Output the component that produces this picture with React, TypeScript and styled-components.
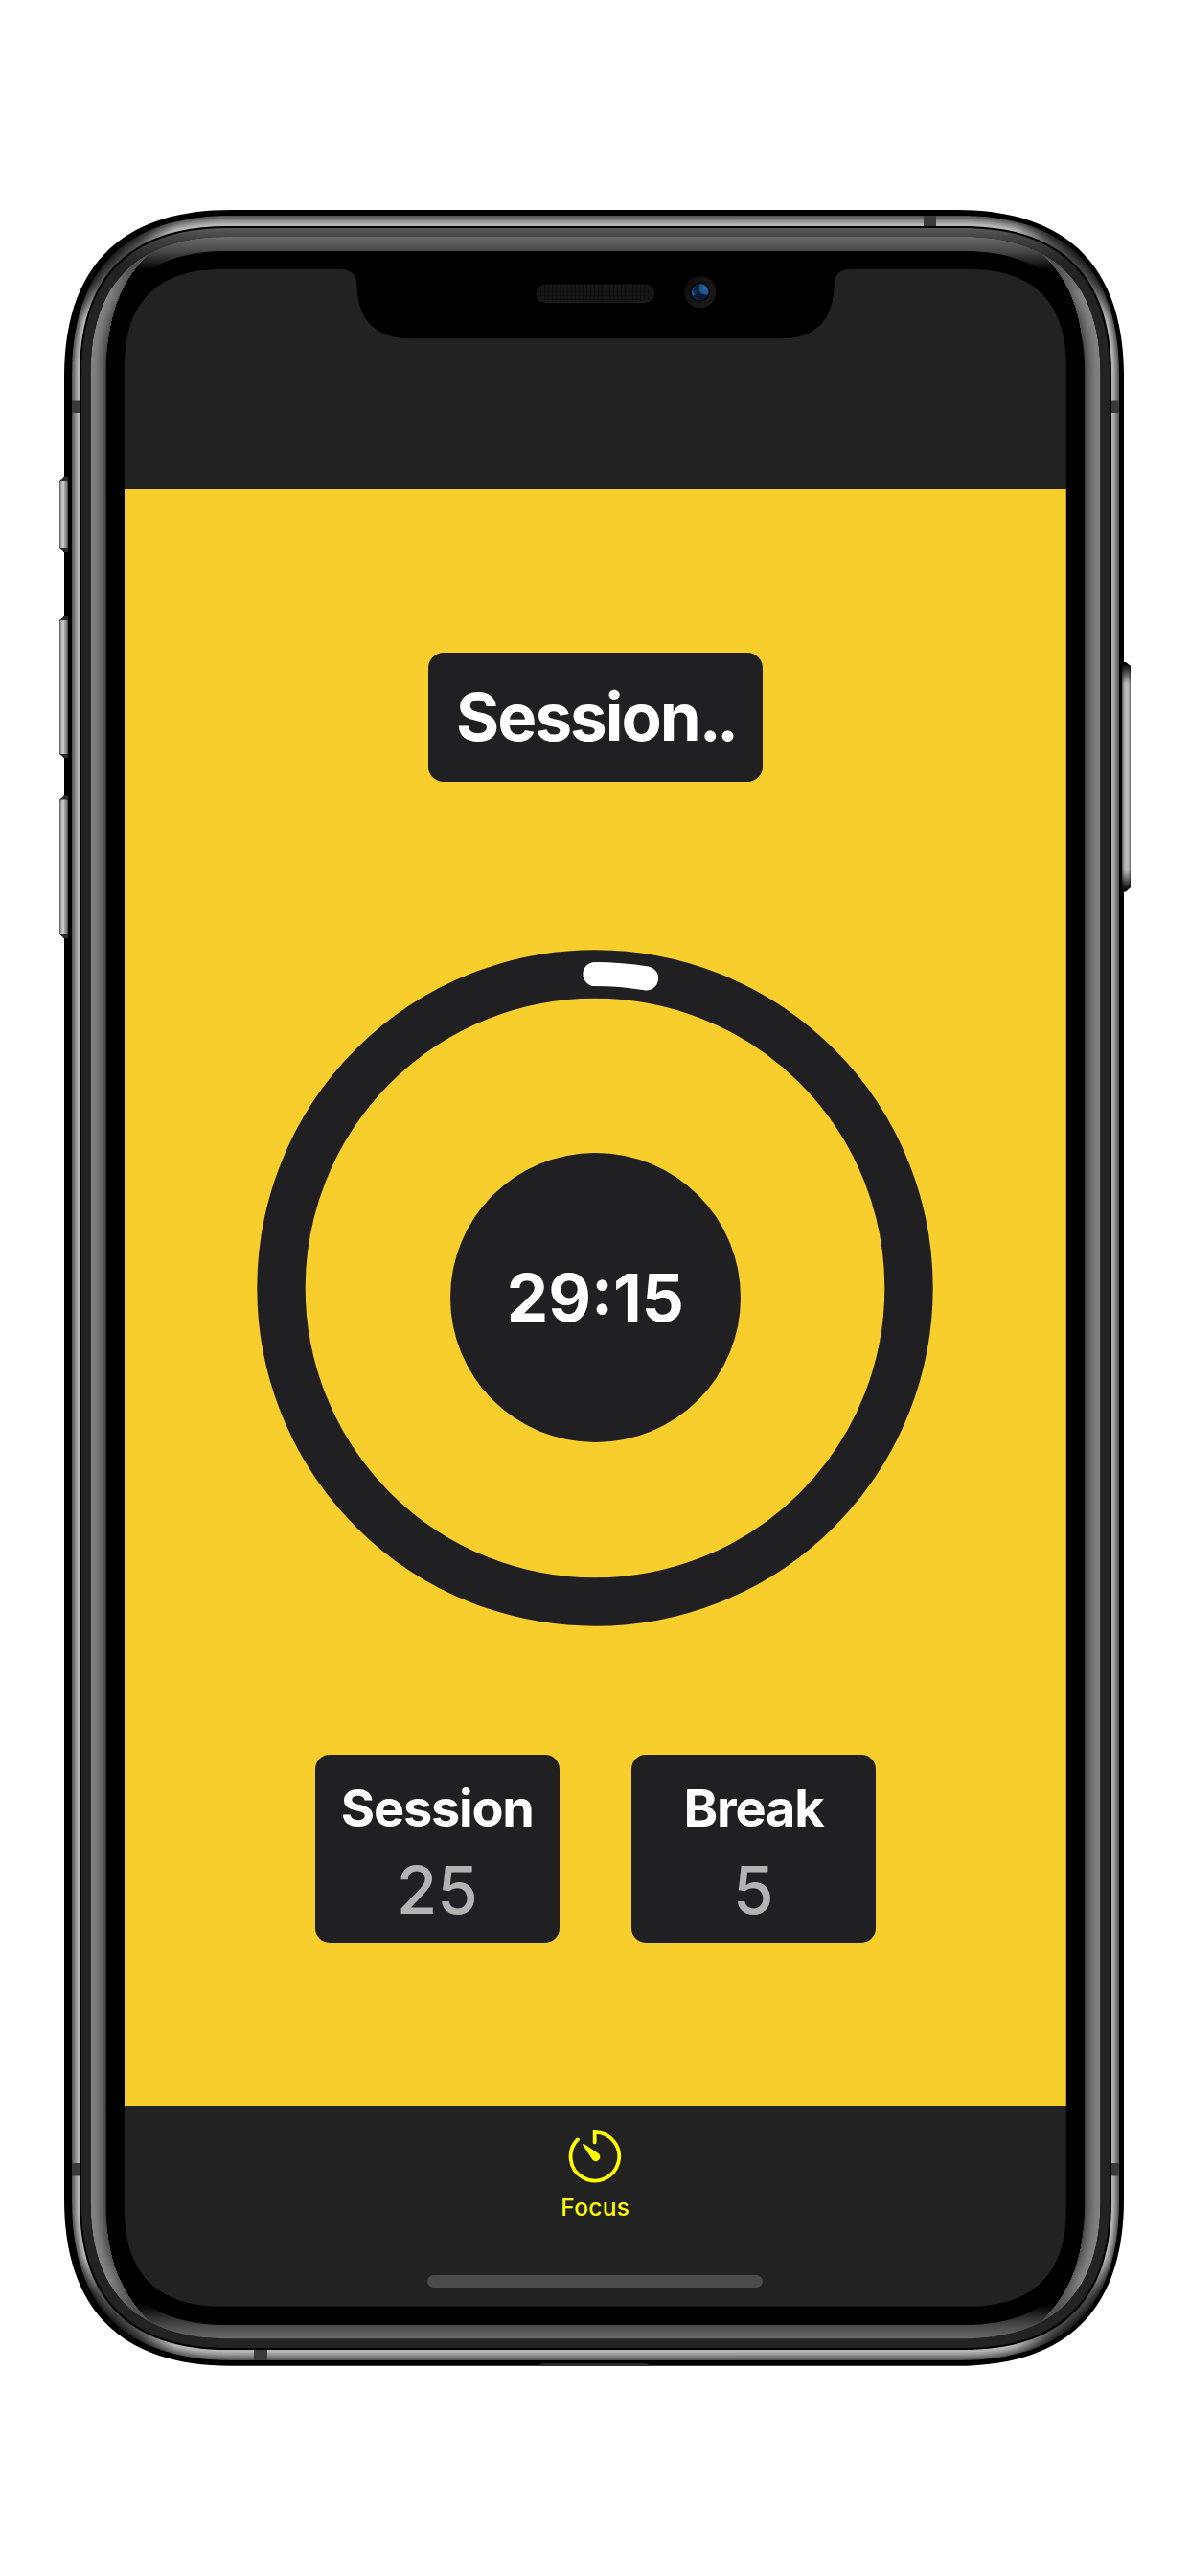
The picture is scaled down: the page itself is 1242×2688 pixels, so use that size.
import React from "react";
import styled, { createGlobalStyle } from "styled-components";

const GlobalStyle = createGlobalStyle`
  *, *::before, *::after { box-sizing: border-box; }
  html, body { margin: 0; padding: 0; background: #fff; }
  body { font-family: Inter, "Liberation Sans", sans-serif; }
`;

type Box = { l: number; t: number; r: number; b: number; rad: number };

/* Rounded rectangle whose corners ease into the straight edges. */
const roundPath = ({ l, t, r, b, rad }: Box) => {
  const e = rad * 1.16;
  const c = (rad * 2.343 - e) / 3;
  return [
    `M${l + e} ${t}H${r - e}`,
    `C${r - c} ${t} ${r} ${t + c} ${r} ${t + e}`,
    `V${b - e}`,
    `C${r} ${b - c} ${r - c} ${b} ${r - e} ${b}`,
    `H${l + e}`,
    `C${l + c} ${b} ${l} ${b - c} ${l} ${b - e}`,
    `V${t + e}`,
    `C${l} ${t + c} ${l + c} ${t} ${l + e} ${t}Z`,
  ].join("");
};

const mix = (a: number, b: number, k: number) => a + (b - a) * k;
const between = (a: Box, b: Box, k: number): Box => ({
  l: mix(a.l, b.l, k),
  t: mix(a.t, b.t, k),
  r: mix(a.r, b.r, k),
  b: mix(a.b, b.b, k),
  rad: mix(a.rad, b.rad, k),
});

const BODY: Box = { l: 67, t: 219, r: 1173, b: 2468.7, rad: 150 };
const METAL: Box = { l: 75, t: 225, r: 1168, b: 2463, rad: 143 };
const GAP: Box = { l: 83, t: 236, r: 1160, b: 2452, rad: 133 };
const RIM: Box = { l: 85, t: 238, r: 1158, b: 2450, rad: 131 };
const BEVEL: Box = { l: 94.5, t: 247, r: 1148.5, b: 2440.3, rad: 123 };
const GLASS: Box = { l: 110.5, t: 262, r: 1132.2, b: 2426, rad: 108 };
const SCREEN: Box = { l: 130, t: 281, r: 1112.7, b: 2406.7, rad: 87 };

const SCREEN_CLIP = roundPath({
  l: 0,
  t: 0,
  r: SCREEN.r - SCREEN.l,
  b: SCREEN.b - SCREEN.t,
  rad: SCREEN.rad,
});

const VOLUME_KEYS = [
  { y: 497, h: 80 },
  { y: 642, h: 150 },
  { y: 829.5, h: 150.5 },
];

type BandProps = { from: Box; to: Box; shades: number[]; steps: number };

const Band = ({ from, to, shades, steps }: BandProps) => (
  <>
    {Array.from({ length: steps }, (_, i) => {
      const k = i / steps;
      const p = k * (shades.length - 1);
      const s = Math.floor(p);
      const g = Math.round(mix(shades[s], shades[s + 1], p - s));
      return <path key={i} d={roundPath(between(from, to, k))} fill={`rgb(${g},${g},${g})`} />;
    })}
  </>
);

const FrameArt = styled.svg`
  position: absolute;
  inset: 0;
  display: block;
`;

const DeviceFrame = () => (
  <FrameArt width="1242" height="2688" viewBox="0 0 1242 2688" aria-hidden="true">
    <defs>
      <linearGradient id="rim" gradientUnits="userSpaceOnUse" x1="0" x2="0" y1="238" y2="2450">
        <stop offset="0" stopColor="#5a5a5a" />
        <stop offset="0.0041" stopColor="#444" />
        <stop offset="0.016" stopColor="#232323" />
        <stop offset="1" stopColor="#232323" />
      </linearGradient>
      <linearGradient id="bevelTop" gradientUnits="userSpaceOnUse" x1="0" x2="0" y1="247" y2="282">
        <stop offset="0" stopColor="#6c6c6c" />
        <stop offset="0.43" stopColor="#484848" />
        <stop offset="1" stopColor="#000" />
      </linearGradient>
      <linearGradient id="bevelBottom" gradientUnits="userSpaceOnUse" x1="0" x2="0" y1="2405" y2="2440">
        <stop offset="0" stopColor="#000" />
        <stop offset="0.6" stopColor="#484848" />
        <stop offset="1" stopColor="#6a6a6a" />
      </linearGradient>
      <linearGradient id="keyLeft" x1="0" x2="1" y1="0" y2="0">
        <stop offset="0" stopColor="#555" />
        <stop offset="0.2" stopColor="#a8a8a8" />
        <stop offset="0.45" stopColor="#d4d4d4" />
        <stop offset="0.62" stopColor="#a0a0a0" />
        <stop offset="0.8" stopColor="#8a8a8a" />
        <stop offset="1" stopColor="#444" />
      </linearGradient>
      <linearGradient id="keyRight" x1="0" x2="1" y1="0" y2="0">
        <stop offset="0" stopColor="#555" />
        <stop offset="0.25" stopColor="#a8a8a8" />
        <stop offset="0.5" stopColor="#bebebe" />
        <stop offset="0.8" stopColor="#b4b4b4" />
        <stop offset="1" stopColor="#555" />
      </linearGradient>
      <linearGradient id="keyFade" x1="0" x2="0" y1="0" y2="1">
        <stop offset="0" stopColor="#000" />
        <stop offset="0.02" stopColor="#000" stopOpacity="0.85" />
        <stop offset="0.095" stopColor="#000" stopOpacity="0" />
        <stop offset="0.905" stopColor="#000" stopOpacity="0" />
        <stop offset="0.98" stopColor="#000" stopOpacity="0.85" />
        <stop offset="1" stopColor="#000" />
      </linearGradient>
      <radialGradient id="cornerShade">
        <stop offset="0" stopColor="#000" stopOpacity="0.75" />
        <stop offset="0.5" stopColor="#000" stopOpacity="0.55" />
        <stop offset="1" stopColor="#000" stopOpacity="0" />
      </radialGradient>
      <radialGradient id="lens" cx="0.9" cy="0.25" r="0.95">
        <stop offset="0" stopColor="#2a6bac" />
        <stop offset="0.4" stopColor="#1c5490" />
        <stop offset="0.6" stopColor="#0d1a36" />
        <stop offset="0.8" stopColor="#12294c" />
        <stop offset="1" stopColor="#2f6aa6" />
      </radialGradient>
      <linearGradient id="lensRing" x1="0" y1="0" x2="1" y2="1">
        <stop offset="0" stopColor="#0c0c0c" />
        <stop offset="1" stopColor="#1d1d1d" />
      </linearGradient>
      <clipPath id="bevelClip">
        <path d={roundPath(BEVEL)} />
      </clipPath>
      <clipPath id="metalClip">
        <path d={roundPath(METAL)} />
      </clipPath>
      <clipPath id="sideClip">
        <path d="M90 200H158V262.5C126 290 110.5 328 110.5 395V2300C110.5 2358 126 2394 158 2425V2460H90Z" />
        <path d="M1153 200H1085V262.5C1117 290 1132.2 328 1132.2 395V2300C1132.2 2358 1117 2394 1085 2425V2460H1153Z" />
      </clipPath>
    </defs>

    {VOLUME_KEYS.map(({ y, h }) => (
      <path
        key={y}
        d={`M71 ${y}L67 ${y + 1}L62 ${y + 5}V${y + h - 5}L67 ${y + h - 1}L71 ${y + h}Z`}
        fill="#2a2a2a"
      />
    ))}

    <path d={roundPath(BODY)} fill="#000" />
    <Band from={METAL} to={GAP} shades={[85, 112, 138, 160, 184, 176]} steps={10} />
    <g clipPath="url(#metalClip)">
      <circle cx="106" cy="258" r="78" fill="url(#cornerShade)" />
      <circle cx="1135" cy="258" r="78" fill="url(#cornerShade)" />
      <circle cx="106" cy="2431" r="78" fill="url(#cornerShade)" />
      <circle cx="1135" cy="2431" r="78" fill="url(#cornerShade)" />
      <g fill="#3a3a3a">
        <rect x="964" y="225" width="13" height="11" />
        <rect x="265" y="2452" width="14" height="11" />
        <rect x="75" y="417.5" width="8" height="13.5" />
        <rect x="1160" y="417.5" width="8" height="13.5" />
        <rect x="75" y="2257" width="8" height="13.5" />
        <rect x="1160" y="2257" width="8" height="13.5" />
      </g>
    </g>
    <path d={roundPath(GAP)} fill="#000" />
    <path d={roundPath(RIM)} fill="url(#rim)" />
    <path d={roundPath(BEVEL)} fill="#000" />
    <g clipPath="url(#bevelClip)">
      <rect x="94" y="246" width="1055" height="37" fill="url(#bevelTop)" />
      <rect x="94" y="2404" width="1055" height="38" fill="url(#bevelBottom)" />
    </g>
    <g clipPath="url(#sideClip)">
      <g clipPath="url(#bevelClip)">
        <Band from={BEVEL} to={GLASS} shades={[132, 122, 100, 70]} steps={16} />
        <circle cx="160" cy="258" r="66" fill="url(#cornerShade)" opacity="0.6" />
        <circle cx="1083" cy="258" r="66" fill="url(#cornerShade)" opacity="0.6" />
        <circle cx="160" cy="2429" r="66" fill="url(#cornerShade)" opacity="0.6" />
        <circle cx="1083" cy="2429" r="66" fill="url(#cornerShade)" opacity="0.6" />
      </g>
    </g>
    <path d={roundPath(GLASS)} fill="#000" />

    {VOLUME_KEYS.map(({ y, h }) => (
      <g key={y}>
        <rect x="66" y={y + 1} width="5" height={h - 2} fill="#2a2a2a" />
        <rect x="62" y={y + 5} width="9" height={h - 10} rx="1.5" fill="url(#keyLeft)" />
      </g>
    ))}
    <path d="M1171 691H1175L1180 695V926L1175 930.5H1171Z" fill="url(#keyRight)" />
    <path d="M1171 691H1175L1180 695V926L1175 930.5H1171Z" fill="url(#keyFade)" />
    <path d="M561.5 2468.7Q564 2466 569 2466H671Q676 2466 678.5 2468.7Z" fill="#2b2b2b" />
  </FrameArt>
);

const Stage = styled.main`
  position: relative;
  width: 1242px;
  height: 2688px;
  padding: 281px 129.3px 281.3px 130px;
  background: #fff;
`;

const Screen = styled.section`
  position: relative;
  display: flex;
  flex-direction: column;
  width: 982.7px;
  height: 2125.7px;
  background: #222;
  clip-path: path("${SCREEN_CLIP}");
`;

const StatusBar = styled.header`
  flex: 0 0 229.4px;
`;

const Notch = styled.svg`
  display: block;
  margin-left: 226px;
`;

const SensorHousing = () => (
  <Notch width="531" height="74" viewBox="356 281 531 74" aria-hidden="true">
    <defs>
      <pattern id="mesh" width="4" height="4" patternUnits="userSpaceOnUse">
        <rect width="4" height="4" fill="#171717" />
        <path d="M0 0H4M0 0V4" stroke="#0d0d0d" strokeWidth="1.4" />
      </pattern>
    </defs>
    <path
      d="M356 280V281C366 281 372 286 372.4 297C373 333 391 353.3 428 353.3H815C852 353.3 870 333 870.8 297C871 286 877 281 887 281V280Z"
      fill="#000"
    />
    <rect x="559.6" y="296.5" width="123.4" height="19.5" rx="9.7" fill="#1a1a1a" />
    <rect x="560.6" y="297" width="121.4" height="17.2" rx="8.6" fill="url(#mesh)" />
    <circle cx="730.7" cy="304.6" r="16.6" fill="url(#lensRing)" />
    <circle cx="730.7" cy="304.6" r="10" fill="#070709" />
    <circle cx="730.7" cy="304.6" r="8.7" fill="url(#lens)" />
    <path d="M723 308.5A8.7 8.7 0 0 0 738.6 308.3Q731 305 723 308.5Z" fill="#0b1730" opacity="0.85" />
  </Notch>
);

const Timer = styled.div`
  flex: 0 0 1687.4px;
  display: flex;
  flex-direction: column;
  align-items: center;
  padding-top: 171px;
  background: #f8ce2c;
`;

const ModeBadge = styled.h1`
  display: flex;
  align-items: center;
  justify-content: center;
  width: 348.4px;
  height: 135px;
  margin: 0;
  padding-bottom: 1px;
  border-radius: 16px;
  background: #202022;
  color: #fff;
  font-size: 69px;
  font-weight: 700;
  line-height: 84px;
  letter-spacing: -2px;
  white-space: nowrap;
`;

const Dots = styled.span`
  letter-spacing: -4.6px;
`;

const Dial = styled.div`
  display: grid;
  place-items: center;
  width: 706px;
  height: 706px;
  margin-top: 174.6px;

  > * {
    grid-area: 1 / 1;
  }
`;

const Countdown = styled.div`
  display: flex;
  align-items: center;
  justify-content: center;
  width: 302.4px;
  height: 302.4px;
  margin-top: 20px;
  border-radius: 50%;
  background: #202022;
  color: #fff;
  font-size: 69px;
  font-weight: 700;
  line-height: 84px;
  white-space: nowrap;
`;

const RADIUS = 327.5;

const ProgressRing = ({ degrees }: { degrees: number }) => {
  const a = (degrees * Math.PI) / 180;
  const x = 353 + RADIUS * Math.sin(a);
  const y = 353 - RADIUS * Math.cos(a);
  return (
    <svg width="706" height="706" viewBox="0 0 706 706" fill="none" aria-hidden="true">
      <circle cx="353" cy="353" r={RADIUS} stroke="#202022" strokeWidth="50.4" />
      <path
        d={`M353 ${353 - RADIUS}A${RADIUS} ${RADIUS} 0 0 1 ${x} ${y}`}
        stroke="#fff"
        strokeWidth="25.2"
        strokeLinecap="round"
      />
    </svg>
  );
};

const Settings = styled.div`
  display: flex;
  gap: 75.6px;
  margin-top: 134px;
`;

const Card = styled.div`
  display: flex;
  flex-direction: column;
  align-items: center;
  width: 254.6px;
  height: 195.8px;
  padding-top: 23px;
  border-radius: 15px;
  background: #202022;
`;

const CardTitle = styled.div`
  color: #fff;
  font-size: 54px;
  font-weight: 700;
  line-height: 66px;
  letter-spacing: -1.2px;
  white-space: nowrap;
`;

const CardValue = styled.div`
  margin-top: 10px;
  color: #b3b3b3;
  font-size: 69px;
  font-weight: 450;
  line-height: 84px;
`;

const TabBar = styled.nav`
  flex: 1;
  display: flex;
  flex-direction: column;
  align-items: center;
  padding-top: 24px;
`;

const Tab = styled.div`
  display: flex;
  flex-direction: column;
  align-items: center;
  color: #ff0;
`;

const TabLabel = styled.span`
  margin-top: 10px;
  font-size: 24.4px;
  font-weight: 500;
  line-height: 30px;
  letter-spacing: 0.4px;
`;

const HomeIndicator = styled.div`
  width: 350px;
  height: 13px;
  margin-top: 56px;
  border-radius: 7px;
  background: #4b4b4b;
`;

const TimerIcon = () => (
  <svg width="56" height="56" viewBox="0 0 56 56" fill="none" aria-hidden="true">
    <path
      d="M27.7 13.4V2.9A25.3 25.3 0 1 1 9.9 10.4"
      stroke="currentColor"
      strokeWidth="3.8"
      strokeLinecap="round"
      strokeLinejoin="miter"
    />
    <path
      d="M15.3 16.2C15 15 15.9 14.6 16.9 15.2L31.8 25.3A4.5 4.5 0 1 1 25.4 31.6Z"
      fill="currentColor"
    />
  </svg>
);

export default function App() {
  return (
    <>
      <GlobalStyle />
      <Stage>
        <DeviceFrame />
        <Screen>
          <StatusBar>
            <SensorHousing />
          </StatusBar>
          <Timer>
            <ModeBadge>
              Session<Dots>..</Dots>
            </ModeBadge>
            <Dial>
              <ProgressRing degrees={9.4} />
              <Countdown>29:15</Countdown>
            </Dial>
            <Settings>
              <Card>
                <CardTitle>Session</CardTitle>
                <CardValue>25</CardValue>
              </Card>
              <Card>
                <CardTitle>Break</CardTitle>
                <CardValue>5</CardValue>
              </Card>
            </Settings>
          </Timer>
          <TabBar>
            <Tab>
              <TimerIcon />
              <TabLabel>Focus</TabLabel>
            </Tab>
            <HomeIndicator />
          </TabBar>
        </Screen>
      </Stage>
    </>
  );
}
